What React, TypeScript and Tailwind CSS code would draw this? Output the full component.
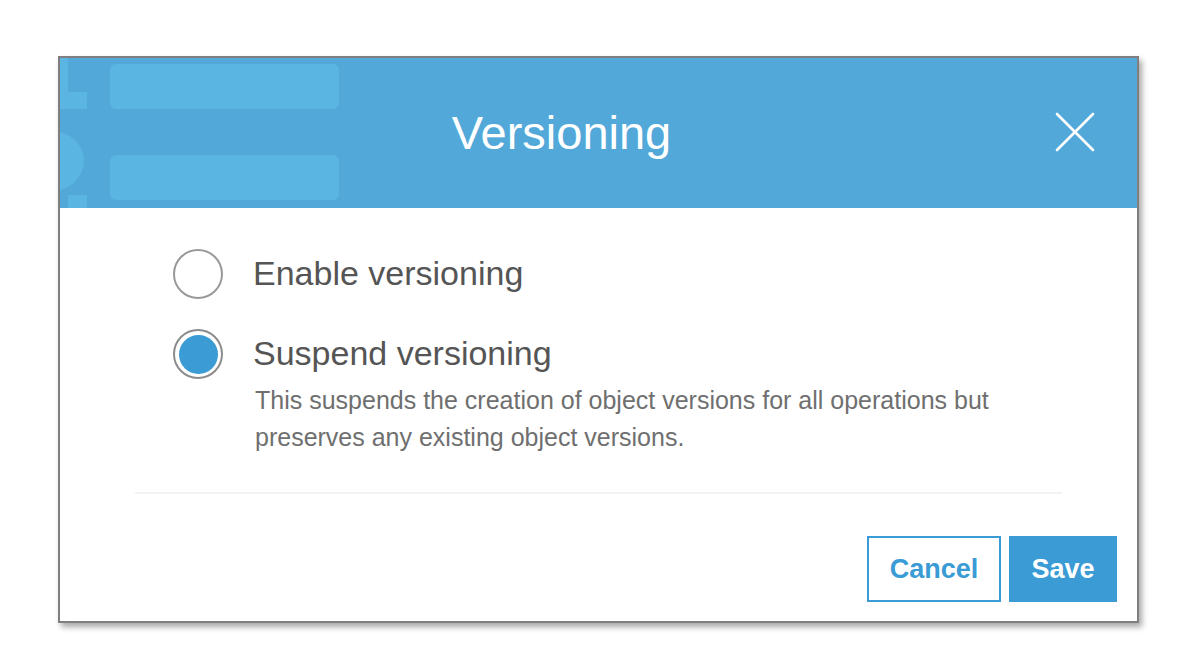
import React from "react";

export default function App() {
  const font = { fontFamily: '"Liberation Sans", Arial, sans-serif' };
  return (
    <div className="w-[1180px] h-[652px] bg-white pt-[56px] pl-[58px]" style={font}>
      <div className="w-[1081px] h-[567px] border-2 border-[#7f7f7f] bg-white shadow-[3px_4px_6px_rgba(0,0,0,0.35)] flex flex-col">
        {/* Header */}
        <div className="relative h-[150px] bg-[#52a9d9] flex items-center justify-center pr-[74px] overflow-hidden shrink-0">
          <svg className="absolute left-0 top-0" width="300" height="150" viewBox="0 0 300 150">
            <rect x="0" y="-2" width="8" height="36" fill="#5ab5e3" />
            <rect x="0" y="34" width="27" height="17" fill="#5ab5e3" />
            <path d="M0 74 A 32 30 0 0 1 24 104 A 32 30 0 0 1 0 132 Z" fill="#5ab5e3" />
            <rect x="8" y="137" width="19" height="14" fill="#5ab5e3" />
            <rect x="50" y="6" width="229" height="45" rx="6" fill="#5ab5e3" />
            <rect x="50" y="97" width="229" height="45" rx="6" fill="#5ab5e3" />
          </svg>
          <h1 className="relative text-white text-[47px] leading-none mt-[-2px]">Versioning</h1>
          <button className="absolute right-[42px] top-[54px] w-[40px] h-[40px]">
            <svg width="40" height="40" viewBox="0 0 40 40">
              <path d="M2 2 L38 38 M38 2 L2 38" stroke="white" strokeWidth="2.6" strokeLinecap="round" />
            </svg>
          </button>
        </div>

        {/* Body */}
        <div className="flex-1 flex flex-col">
          <div className="pl-[113px] pt-[41px] flex flex-col gap-[30px]">
            <label className="flex items-center gap-[30px]">
              <span className="w-[50px] h-[50px] rounded-full border-2 border-[#999999] bg-white shrink-0" />
              <span className="text-[34px] text-[#555555] leading-none mt-[-3px]">Enable versioning</span>
            </label>
            <div>
              <label className="flex items-center gap-[30px]">
                <span className="w-[50px] h-[50px] rounded-full border-2 border-[#8c8c8c] bg-white shrink-0 flex items-center justify-center">
                  <span className="w-[39px] h-[39px] rounded-full bg-[#3a9bd5]" />
                </span>
                <span className="text-[34px] text-[#555555] leading-none mt-[-3px]">Suspend versioning</span>
              </label>
              <p className="ml-[82px] mt-[3px] text-[25px] leading-[37px] text-[#6f6f6f] w-[780px]">
                This suspends the creation of object versions for all operations but preserves any existing object versions.
              </p>
            </div>
          </div>
          <div className="mx-[75px] mt-[36px] h-[2px] bg-[#f2f2f2]" />
          <div className="flex justify-end gap-[8px] pr-[20px] mt-[42px]">
            <button className="w-[134px] h-[66px] border-2 border-[#3a9bd5] text-[#3a9bd5] font-bold text-[27px] bg-white">
              Cancel
            </button>
            <button className="w-[108px] h-[66px] bg-[#3a9bd5] text-white font-bold text-[27px]">
              Save
            </button>
          </div>
        </div>
      </div>
    </div>
  );
}
